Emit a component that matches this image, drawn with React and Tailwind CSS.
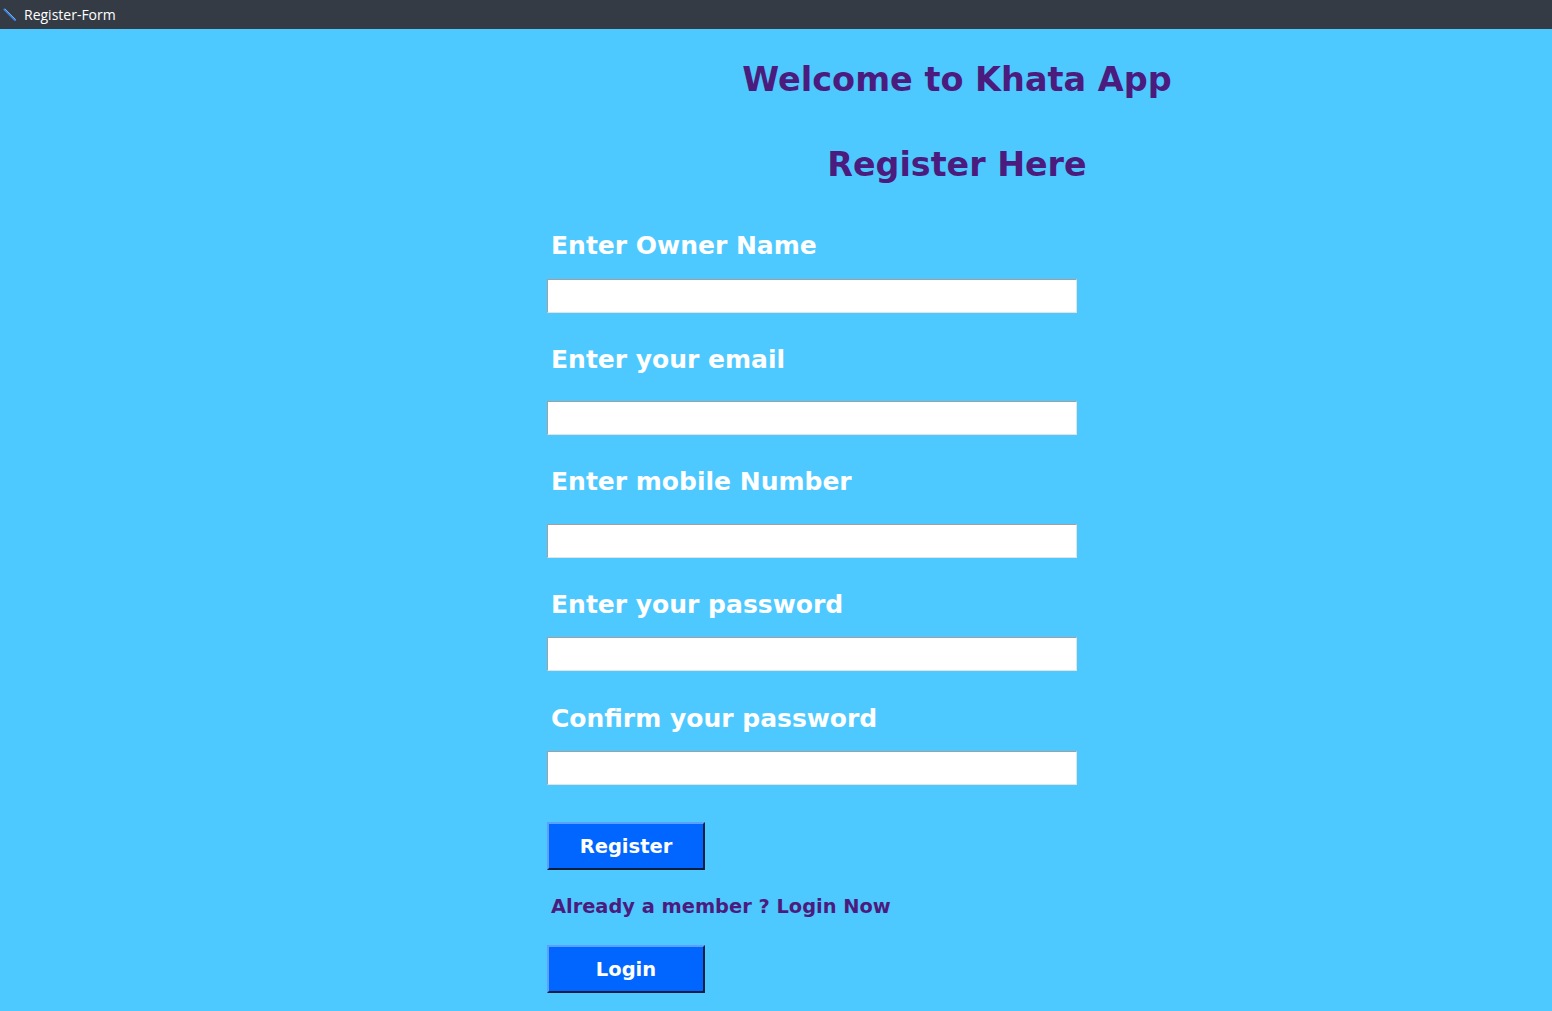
import React from "react";

const Field = ({ label, labelGap, inputGap }) => (
  <>
    <label className={`block pl-[4px] text-[25px] leading-[25px] font-bold text-white ${labelGap}`}>{label}</label>
    <input type="text" className={`block w-[530px] h-[34px] bg-white border border-t-[#a0a0a0] border-l-[#a0a0a0] border-r-[#e3e3e3] border-b-[#e3e3e3] outline-none ${inputGap}`} />
  </>
);

const PenIcon = () => (
  <svg width="14" height="14" viewBox="0 0 14 14" className="shrink-0">
    <path d="M1.5 1.5 L12 12" stroke="#3b7fd4" strokeWidth="2.2" strokeLinecap="round" />
    <path d="M2 1 L12.5 11.5" stroke="#8ab8ee" strokeWidth="0.8" />
  </svg>
);

export default function App() {
  return (
    <div className="w-[1552px] h-[1011px] overflow-hidden bg-[#4dc9ff]" style={{ fontFamily: '"DejaVu Sans", Verdana, sans-serif' }}>
      {/* window title bar */}
      <div className="h-[29px] bg-[#353b45] flex items-center gap-[7px] pl-[3px]">
        <PenIcon />
        <span className="text-white text-[14px]" style={{ fontFamily: '"Open Sans", "Noto Sans", sans-serif' }}>Register-Form</span>
      </div>

      <div className="pl-[547px]">
        <div className="w-[820px] text-center text-[#4b1b7e] font-bold">
          <h1 className="mt-[34px] text-[33.5px] leading-[34px]">Welcome to Khata App</h1>
          <h2 className="mt-[51px] text-[33.3px] leading-[34px]">Register Here</h2>
        </div>

        <Field label="Enter Owner Name" labelGap="mt-[51px]" inputGap="mt-[21px]" />
        <Field label="Enter your email" labelGap="mt-[34px]" inputGap="mt-[29px]" />
        <Field label="Enter mobile Number" labelGap="mt-[34px]" inputGap="mt-[30px]" />
        <Field label="Enter your password" labelGap="mt-[34px]" inputGap="mt-[20px]" />
        <Field label="Confirm your password" labelGap="mt-[35px]" inputGap="mt-[20px]" />

        <button className="mt-[37px] block w-[158px] h-[48px] pt-[2px] bg-[#0066ff] text-white font-bold text-[19.5px] border-2 border-t-[#5aa0ff] border-l-[#5aa0ff] border-r-[#0a1f3d] border-b-[#0a1f3d]">
          Register
        </button>
        <p className="mt-[27px] pl-[4px] text-[19.4px] leading-[20px] font-bold text-[#4b1b7e]">Already a member ? Login Now</p>
        <button className="mt-[28px] block w-[158px] h-[48px] pt-[2px] bg-[#0066ff] text-white font-bold text-[19.5px] border-2 border-t-[#5aa0ff] border-l-[#5aa0ff] border-r-[#0a1f3d] border-b-[#0a1f3d]">
          Login
        </button>
      </div>
    </div>
  );
}
